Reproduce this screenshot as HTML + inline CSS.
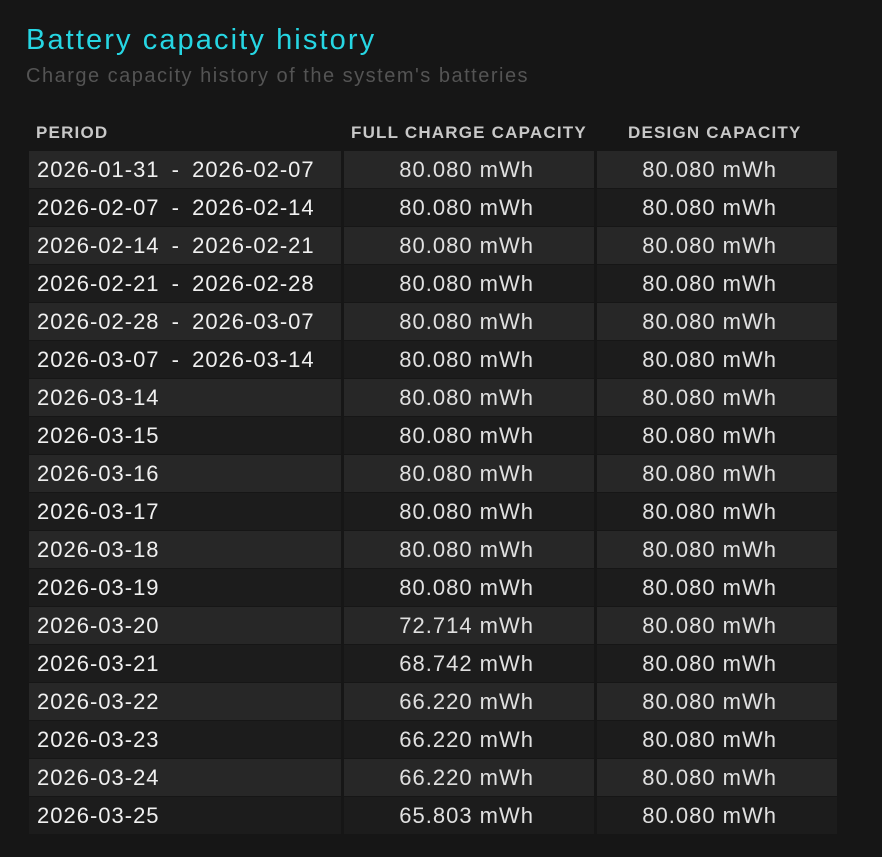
<!DOCTYPE html>
<html><head><meta charset="utf-8"><style>
body{margin:0;background:#161616;width:882px;height:857px;overflow:hidden;font-family:"Liberation Sans",sans-serif;}
h1{position:absolute;left:26px;top:24px;margin:0;font-weight:normal;font-size:29px;color:#26d6e3;letter-spacing:2.1px}
.sub{position:absolute;left:26px;top:65px;font-size:20px;color:#545454;letter-spacing:1.5px}
.hd{position:absolute;top:123px;font-size:17px;font-weight:bold;color:#c8c8c8;letter-spacing:1.2px}
.row{position:absolute;left:29px;height:37px;width:808px;}
.c{position:absolute;top:0;height:37px;line-height:37px;font-size:22px;color:#f0f0f0;box-sizing:border-box;letter-spacing:1px;white-space:nowrap}
.p{left:0;width:312px;padding-left:8px;word-spacing:5px}
.f{left:315px;width:250px;text-align:right;padding-right:60px;color:#e0e0e0}
.d{left:568px;width:240px;text-align:right;padding-right:60px;color:#e0e0e0}
.a .c{background:#272727}.b .c{background:#1c1c1c}
</style></head><body>
<h1>Battery capacity history</h1>
<div class="sub">Charge capacity history of the system's batteries</div>
<div class="hd" style="left:36px">PERIOD</div>
<div class="hd" style="left:351px">FULL CHARGE CAPACITY</div>
<div class="hd" style="left:628px">DESIGN CAPACITY</div>
<div id="t"></div>
<script>
var r=[["2026-01-31 - 2026-02-07","80.080"],["2026-02-07 - 2026-02-14","80.080"],["2026-02-14 - 2026-02-21","80.080"],["2026-02-21 - 2026-02-28","80.080"],["2026-02-28 - 2026-03-07","80.080"],["2026-03-07 - 2026-03-14","80.080"],["2026-03-14","80.080"],["2026-03-15","80.080"],["2026-03-16","80.080"],["2026-03-17","80.080"],["2026-03-18","80.080"],["2026-03-19","80.080"],["2026-03-20","72.714"],["2026-03-21","68.742"],["2026-03-22","66.220"],["2026-03-23","66.220"],["2026-03-24","66.220"],["2026-03-25","65.803"]];
var h="";r.forEach(function(x,i){h+='<div class="row '+(i%2?'b':'a')+'" style="top:'+(151+i*38)+'px"><div class="c p">'+x[0]+'</div><div class="c f">'+x[1]+' mWh</div><div class="c d">80.080 mWh</div></div>'});
document.getElementById("t").innerHTML=h;
</script>
</body></html>
